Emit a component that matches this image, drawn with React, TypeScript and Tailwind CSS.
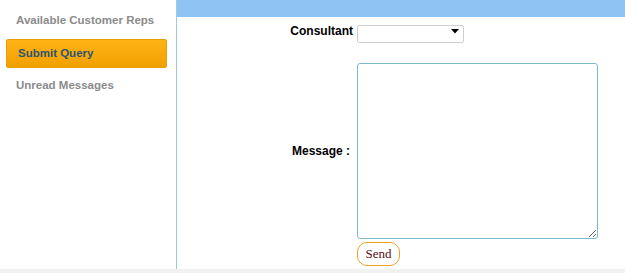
import { useState } from "react";

function Sidebar() {
  return (
    <div className="w-[177px] shrink-0 border-r border-[#9ccbe6] bg-white pt-[12px] font-['Liberation_Sans',Arial,sans-serif]">
      <div className="flex h-[18px] items-center pl-[16px] text-[11.5px] font-bold text-[#8b8b8b]">
        Available Customer Reps
      </div>
      <div className="mx-[6px] mt-[9px] flex h-[29px] w-[161px] items-center rounded-[2px] border border-[#e99d06] bg-gradient-to-b from-[#ffb416] to-[#f29f00] pl-[11px] text-[11.5px] font-bold text-[#2d5570]">
        Submit Query
      </div>
      <div className="mt-[9px] flex h-[18px] items-center pl-[16px] text-[11.5px] font-bold text-[#8b8b8b]">
        Unread Messages
      </div>
    </div>
  );
}

export default function App() {
  const [consultant, setConsultant] = useState("");
  const [message, setMessage] = useState("");

  return (
    <div className="flex h-[273px] w-[625px] flex-col bg-white">
      <div className="flex h-[269px]">
        <Sidebar />
        <div className="flex flex-1 flex-col">
          <div className="h-[17px] bg-[#8ec3f4]" />
          <div className="mt-[5px] flex items-center font-['Liberation_Sans',Arial,sans-serif]">
            <label className="w-[180px] pr-[4px] text-right text-[12px] font-bold text-black">
              Consultant
            </label>
            <div className="relative h-[18px] w-[107px]">
              <select
                value={consultant}
                onChange={(e) => setConsultant(e.target.value)}
                className="h-full w-full appearance-none rounded-[2px] border border-[#cfcfcf] bg-white text-[12px] outline-none"
              >
                <option value=""></option>
              </select>
              <svg
                className="pointer-events-none absolute right-[5px] top-[7px]"
                width="8"
                height="5"
                viewBox="0 0 8 5"
              >
                <path d="M0 0H8L4 4.5Z" fill="#000" />
              </svg>
            </div>
          </div>
          <div className="mt-[23px] flex items-center font-['Liberation_Sans',Arial,sans-serif]">
            <label className="w-[180px] pr-[7px] text-right text-[12px] font-bold text-black">
              Message :
            </label>
            <textarea
              value={message}
              onChange={(e) => setMessage(e.target.value)}
              className="h-[176px] w-[241px] rounded-[3px] border border-[#7fbacb] bg-white outline-none"
            />
          </div>
          <div className="mt-[3px] flex">
            <div className="w-[180px]" />
            <button className="h-[24px] w-[43px] rounded-[10px] border border-[#eca22a] bg-white font-['Liberation_Serif','Times_New_Roman',serif] text-[13px] text-[#5c0b16]">
              Send
            </button>
          </div>
        </div>
      </div>
      <div className="h-[4px] bg-[#f1f1f1]" />
    </div>
  );
}
